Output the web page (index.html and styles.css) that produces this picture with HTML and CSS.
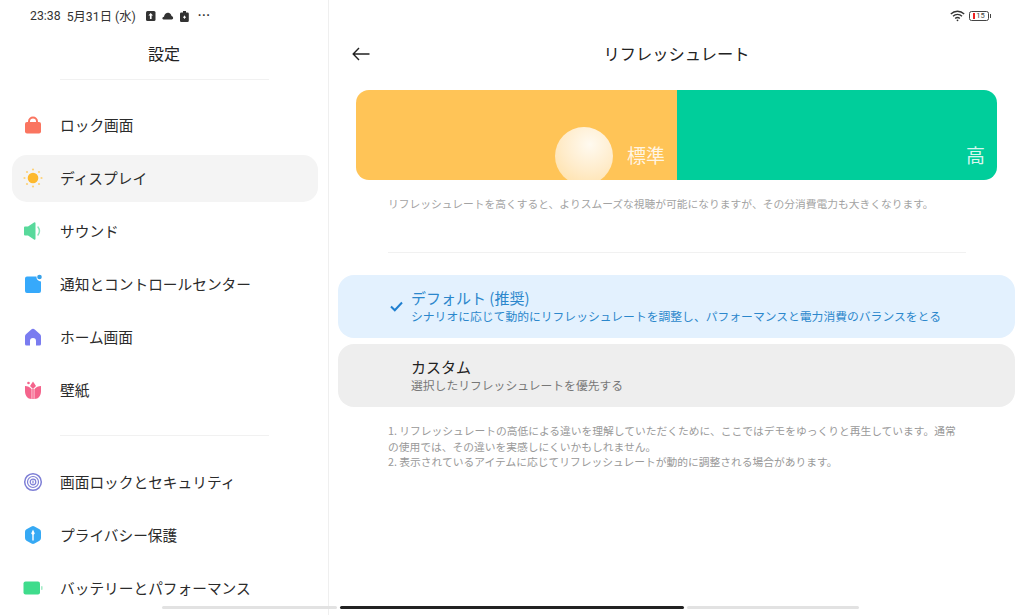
FILE: index.html
```html
<!DOCTYPE html>
<html lang="ja">
<head>
  <meta charset="UTF-8">
  <title>リフレッシュレート</title>
  <link rel="stylesheet" href="styles.css">
</head>
<body>
  <div class="app">
    <aside class="sidebar">
      <div class="status status-left">
        <span class="clock">23:38</span>
        <span class="date">5月31日 (水)</span>
        <svg class="status-icon" width="11" height="10" viewBox="0 0 11 10"><rect x="1" y="0" width="9.500" height="10" rx="1.500" fill="#333"/><path d="M5.700 2 8 4.600H6.600V8H4.900V4.600H3.400Z" fill="#fff"/></svg>
        <svg class="status-icon" width="12" height="8" viewBox="0 0 12 8"><path d="M1.500 7.500C0 7.500 0 5 2 4.800 2.400 2 4.500 .5 6.500 .8c1.800.3 2.800 1.700 3 3.300 2 .3 2.300 3.400.2 3.400Z" fill="#333"/></svg>
        <svg class="status-icon" width="9" height="11" viewBox="0 0 9 11"><path d="M3 0h3v1.500h1.500a1.300 1.300 0 0 1 1.300 1.300v6.900a1.300 1.300 0 0 1-1.300 1.300h-6.200a1.300 1.300 0 0 1-1.300-1.300v-6.900a1.300 1.300 0 0 1 1.300-1.300H3Z" fill="#333"/><path d="M3 6.200h3M4.500 4.700v3" stroke="#fff"/></svg>
        <span class="more">···</span>
      </div>
      <h1 class="side-title">設定</h1>
      <hr class="side-rule">
      <nav class="nav nav-first">
        <a class="nav-item">
          <svg width="20" height="20" viewBox="0 0 20 20"><path d="M6 9V6.500a4 4 0 0 1 8 0V9" fill="none" stroke="#fa7560" stroke-width="2"/><rect x="2" y="7" width="16" height="11.500" rx="2" fill="#fa7560"/></svg>
          ロック画面
        </a>
        <a class="nav-item is-active">
          <svg width="20" height="20" viewBox="0 0 20 20"><circle cx="10" cy="10" r="5.300" fill="#fdb92e"/><g fill="#fdd27a"><circle cx="10" cy="1.500" r="1.100"/><circle cx="10" cy="18.500" r="1.100"/><circle cx="1.500" cy="10" r="1.100"/><circle cx="18.500" cy="10" r="1.100"/><circle cx="4" cy="4" r="1.100"/><circle cx="16" cy="4" r="1.100"/><circle cx="4" cy="16" r="1.100"/><circle cx="16" cy="16" r="1.100"/></g></svg>
          ディスプレイ
        </a>
        <a class="nav-item">
          <svg width="20" height="20" viewBox="0 0 20 20"><path d="M1 6.500a1 1 0 0 1 1-1h3L11 1.500a1 1 0 0 1 1.500.8v15.400a1 1 0 0 1-1.500.8L5 14.500H2a1 1 0 0 1-1-1Z" fill="#58d99b"/><path d="M15 6c1.800 2.500 1.800 5.500 0 8" fill="none" stroke="#8be5ba" stroke-width="1.500" stroke-linecap="round"/></svg>
          サウンド
        </a>
        <a class="nav-item">
          <svg width="20" height="20" viewBox="0 0 20 20"><path d="M4 2.500h9.500a4.500 4.500 0 0 0 4.500 5V17a2 2 0 0 1-2 2H4a2 2 0 0 1-2-2V4.500a2 2 0 0 1 2-2Z" fill="#36a9fb"/><circle cx="16.500" cy="3" r="2.300" fill="#36a0e8"/></svg>
          通知とコントロールセンター
        </a>
        <a class="nav-item">
          <svg width="20" height="20" viewBox="0 0 20 20"><path d="M2 9.500c0-1 .4-1.700 1.200-2.400L8 2.700a3 3 0 0 1 4 0l4.800 4.400c.8.700 1.200 1.400 1.200 2.400V17a1.500 1.500 0 0 1-1.500 1.500H13V14a3 3 0 0 0-6 0v4.500H3.500A1.500 1.500 0 0 1 2 17Z" fill="#7a7cf0"/></svg>
          ホーム画面
        </a>
        <a class="nav-item">
          <svg width="20" height="20" viewBox="0 0 20 20"><path d="M2 6c2.500 0 5 1 6.500 3v10C4.500 19 2 15.500 2 11Z" fill="#f4648c"/><path d="M18 6c-2.500 0-5 1-6.500 3v10c4 0 6.500-3.500 6.500-8Z" fill="#f4648c"/><path d="M10 1.500 13 6l-3 3-3-3Z" fill="#f4648c"/><path d="M8.500 9h3v10h-3Z" fill="#f98aa8"/><circle cx="5.500" cy="3" r="1.300" fill="#f4648c"/></svg>
          壁紙
        </a>
      </nav>
      <hr class="side-rule side-rule-mid">
      <nav class="nav">
        <a class="nav-item">
          <svg width="20" height="20" viewBox="0 0 20 20" fill="none" stroke="#7e7fd6"><circle cx="10" cy="10" r="8.300" stroke-width="1.500"/><circle cx="10" cy="10" r="5.500" stroke-width="1.200"/><circle cx="10" cy="10" r="2.800" stroke-width="1.200"/><path d="M10 8.500v3" stroke-width="1.200"/></svg>
          画面ロックとセキュリティ
        </a>
        <a class="nav-item">
          <svg width="20" height="20" viewBox="0 0 20 20"><path d="M8.500 1.500a3 3 0 0 1 3 0l5 2.800A3 3 0 0 1 18 6.900v6.200a3 3 0 0 1-1.500 2.600l-5 2.800a3 3 0 0 1-3 0l-5-2.800A3 3 0 0 1 2 13.100V6.900a3 3 0 0 1 1.500-2.600Z" fill="#36a9f4"/><path d="M10 4.500 11.800 8.500 10.700 9.800V15.500H9.300V9.800L8.200 8.500Z" fill="#fff"/></svg>
          プライバシー保護
        </a>
        <a class="nav-item">
          <svg width="20" height="20" viewBox="0 0 20 20"><rect x="0.500" y="3.500" width="16.500" height="13" rx="2" fill="#3fdc8c"/><rect x="18" y="8" width="1.600" height="4" rx=".8" fill="#a5ecc8"/></svg>
          バッテリーとパフォーマンス
        </a>
      </nav>
    </aside>

    <main class="detail">
      <div class="status status-right">
        <svg width="15" height="12" viewBox="0 0 15 12" fill="none" stroke="#333" stroke-width="1.300"><path d="M.8 4a9.500 9.500 0 0 1 13.400 0"/><path d="M3 6.300a6.300 6.300 0 0 1 9 0"/><path d="M5.200 8.500a3.200 3.200 0 0 1 4.600 0"/><circle cx="7.500" cy="10.300" r=".9" fill="#333" stroke="none"/></svg>
        <div class="battery"><i class="battery-level"></i><span>15</span></div>
      </div>
      <header class="detail-head">
        <svg class="back" width="18" height="14" viewBox="0 0 18 14" fill="none" stroke="#222" stroke-width="1.400"><path d="M17.500 7H1.200M7 1 1.200 7 7 13"/></svg>
        <h2 class="detail-title">リフレッシュレート</h2>
      </header>

      <section class="demo">
        <div class="demo-half demo-std">
          <span class="ball"></span>
          <span class="demo-label">標準</span>
        </div>
        <div class="demo-half demo-high">
          <span class="demo-label">高</span>
        </div>
      </section>
      <p class="hint">リフレッシュレートを高くすると、よりスムーズな視聴が可能になりますが、その分消費電力も大きくなります。</p>
      <hr class="detail-rule">

      <div class="option is-selected">
        <svg class="check" width="13" height="11" viewBox="0 0 13 11" fill="none" stroke="#1f7fd0" stroke-width="2"><path d="M1 5.500 4.800 9.300 12 1.500"/></svg>
        <div>
          <div class="option-name">デフォルト (推奨)</div>
          <div class="option-desc">シナリオに応じて動的にリフレッシュレートを調整し、パフォーマンスと電力消費のバランスをとる</div>
        </div>
      </div>
      <div class="option">
        <div>
          <div class="option-name">カスタム</div>
          <div class="option-desc">選択したリフレッシュレートを優先する</div>
        </div>
      </div>

      <ol class="notes">
        <li>1. リフレッシュレートの高低による違いを理解していただくために、ここではデモをゆっくりと再生しています。通常の使用では、その違いを実感しにくいかもしれません。</li>
        <li>2. 表示されているアイテムに応じてリフレッシュレートが動的に調整される場合があります。</li>
      </ol>
    </main>
  </div>

  <div class="home-bars">
    <span class="home-bar bar-side-left"></span>
    <span class="home-bar bar-main"></span>
    <span class="home-bar bar-side-right"></span>
  </div>
</body>
</html>
```

FILE: styles.css
```css
html, body {
  height: 100%;
  margin: 0;
  overflow: hidden;
  background: #fff;
  color: #222;
  font-family: "Noto Sans CJK JP", "Noto Sans", sans-serif;
}

.app {
  display: grid;
  grid-template-columns: 329px 1fr;
  height: 615px;
}

.sidebar {
  border-right: 1px solid #efefef;
  height: 615px;
  overflow: hidden;
}

.status {
  display: flex;
  align-items: center;
  height: 32px;
  box-sizing: border-box;
}

.status-left {
  padding-left: 30px;
  font-family: Roboto, "Noto Sans CJK JP", sans-serif;
  font-size: 12.300px;
  color: #333;
}

.date {
  margin-left: 6px;
  margin-right: 9px;
}

.status-icon {
  margin-right: 6px;
}

.more {
  margin-left: 3px;
  font-weight: 700;
  letter-spacing: .5px;
}

.side-title {
  margin: 9px 0 0;
  font-size: 16px;
  font-weight: 400;
  line-height: 24px;
  text-align: center;
}

hr {
  border: 0;
  height: 1px;
  background: #f1f1f1;
  margin: 0;
}

.side-rule {
  margin: 14px 59px 0 60px;
}

.side-rule-mid {
  margin-top: 21px;
}

.nav {
  display: flex;
  flex-direction: column;
  gap: 6px;
  margin: 23px 10px 0 12px;
}

.nav-first {
  margin-top: 22px;
}

.nav-item {
  display: flex;
  align-items: center;
  gap: 17px;
  box-sizing: border-box;
  height: 47px;
  padding: 0 0 2px 11px;
  border-radius: 15px;
  font-size: 14.700px;
  color: #2b2b2b;
}

.is-active {
  background: #f4f4f4;
}

.detail {
  min-width: 0;
}

.status-right {
  justify-content: flex-end;
  gap: 4px;
  padding-right: 35px;
}

.battery {
  position: relative;
  display: flex;
  align-items: center;
  justify-content: center;
  box-sizing: border-box;
  width: 20px;
  height: 10px;
  border: 1px solid #444;
  border-radius: 2.500px;
  font-family: Roboto, sans-serif;
  font-size: 7.500px;
  line-height: 1;
  color: #444;
}

.battery::after {
  content: "";
  position: absolute;
  right: -3px;
  top: 2px;
  width: 1.500px;
  height: 4px;
  background: #444;
}

.battery-level {
  width: 2px;
  height: 6px;
  margin-right: 1px;
  background: #e22;
}

.detail-head {
  display: flex;
  align-items: center;
  justify-content: center;
  position: relative;
  height: 24px;
  margin-top: 9px;
}

.back {
  position: absolute;
  left: 23px;
  top: 6px;
}

.detail-title {
  margin: 0;
  font-size: 16.300px;
  font-weight: 400;
}

.demo {
  display: flex;
  height: 90px;
  margin: 25px 27px 0 27px;
  border-radius: 13px;
  overflow: hidden;
}

.demo-half {
  position: relative;
  display: flex;
  align-items: flex-end;
  justify-content: flex-end;
  box-sizing: border-box;
  padding: 0 12px 11px 0;
}

.demo-std {
  width: 321px;
  background: #ffc457;
}

.demo-high {
  flex: 1;
  background: #00ce9b;
}

.demo-label {
  position: relative;
  font-size: 19px;
  line-height: 28px;
  color: rgba(255, 255, 255, .85);
}

.ball {
  position: absolute;
  left: 199px;
  top: 37px;
  width: 58px;
  height: 58px;
  border-radius: 50%;
  background: radial-gradient(circle at 60% 30%, #fffaf0 0%, #ffeccb 50%, #ffe2ac 85%, #ffe8bd 100%);
}

.hint {
  margin: 16px 40px 0 59px;
  font-size: 10.750px;
  line-height: 16px;
  color: #a3a3a3;
  white-space: nowrap;
}

.detail-rule {
  margin: 40px 58px 0 59px;
}

.option {
  display: flex;
  align-items: center;
  box-sizing: border-box;
  height: 63px;
  margin: 6px 9px 0 9px;
  padding: 0 0 2px 73px;
  border-radius: 16px;
  background: #eeeeee;
}

.is-selected {
  position: relative;
  margin-top: 22px;
  background: #e3f1fe;
  color: #2b87cc;
}

.check {
  position: absolute;
  left: 52px;
  top: 26px;
}

.option-name {
  font-size: 15px;
  line-height: 19px;
}

.option-desc {
  margin-top: 1px;
  font-size: 11.800px;
  line-height: 15px;
  color: #777;
}

.is-selected .option-desc {
  color: #2b87cc;
}

.notes {
  margin: 16px 58px 0 59px;
  padding: 0;
  list-style: none;
  font-size: 10.750px;
  line-height: 15.700px;
  color: #999;
}

.home-bars {
  position: absolute;
  left: 162px;
  top: 606px;
  display: flex;
  gap: 3px;
}

.home-bar {
  height: 3px;
  border-radius: 2px;
  background: #e2e2e2;
}

.bar-side-left {
  width: 175px;
}

.bar-main {
  width: 344px;
  background: #222;
}

.bar-side-right {
  width: 172px;
}
```
